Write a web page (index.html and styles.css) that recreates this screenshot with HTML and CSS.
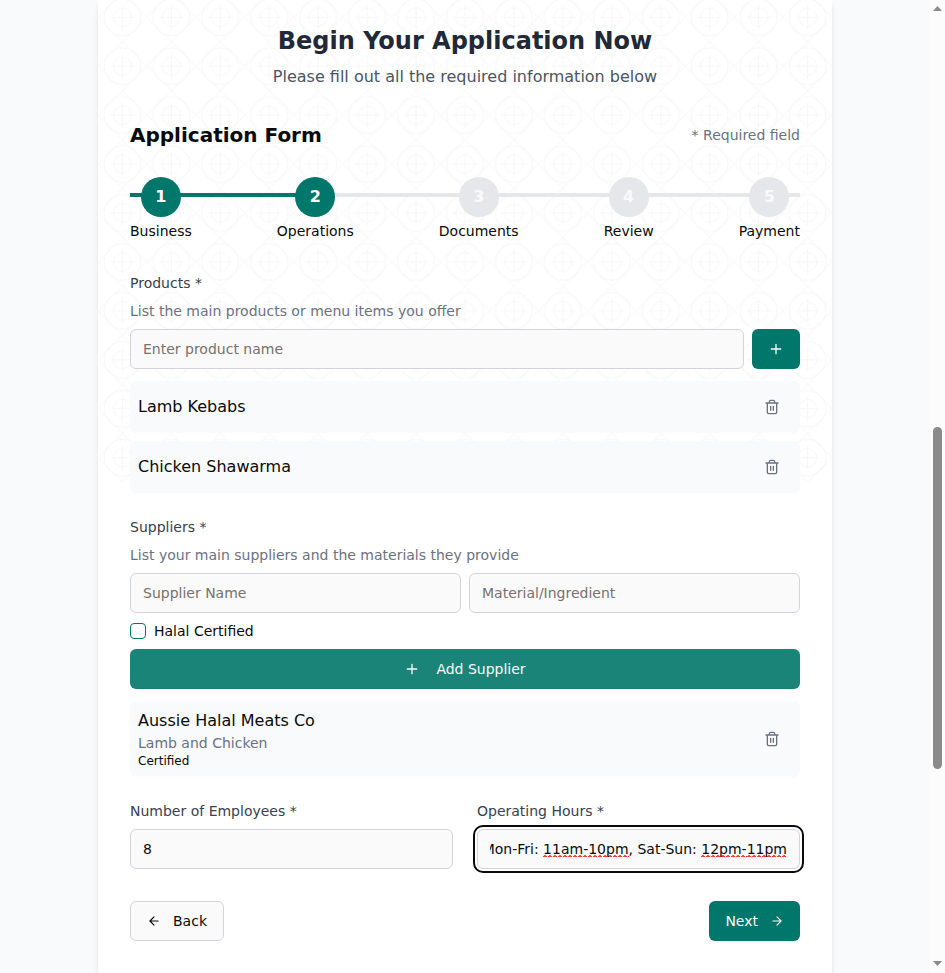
FILE: index.html
```html
<!DOCTYPE html>
<html lang="en">
<head>
<meta charset="utf-8">
<title>Begin Your Application Now</title>
<link rel="stylesheet" href="styles.css">
</head>
<body>
<svg class="defs" aria-hidden="true">
  <symbol id="trash" viewBox="0 0 24 24"><path d="M3 6h18M19 6v14c0 1-1 2-2 2H7c-1 0-2-1-2-2V6M8 6V4c0-1 1-2 2-2h4c1 0 2 1 2 2v2M10 11v6M14 11v6"/></symbol>
  <symbol id="plus" viewBox="0 0 24 24"><path d="M5 12h14M12 5v14"/></symbol>
  <symbol id="right" viewBox="0 0 24 24"><path d="M5 12h14M12 5l7 7-7 7"/></symbol>
  <symbol id="left" viewBox="0 0 24 24"><path d="M12 19l-7-7 7-7M19 12H5"/></symbol>
</svg>
<div class="window">
  <main class="page">
    <section class="card">
      <svg class="ornament" aria-hidden="true">
        <defs>
          <pattern id="tile" width="48.933" height="48.933" y="-7.2" patternUnits="userSpaceOnUse" viewBox="0 0 80 80">
            <path d="M40 0L80 40L40 80L0 40ZM40 20v40M20 40h40"/>
            <circle cx="40" cy="40" r="30"/><circle cx="40" cy="40" r="15"/>
          </pattern>
        </defs>
        <rect width="734" height="482" fill="url(#tile)" stroke="none"/>
      </svg>
      <header class="intro">
        <h1>Begin Your Application Now</h1>
        <p>Please fill out all the required information below</p>
      </header>
      <div class="form-head">
        <h2>Application Form</h2>
        <span>* Required field</span>
      </div>
      <div class="steps">
        <div class="track"><div class="progress"></div></div>
        <div class="step done"><b>1</b><span>Business</span></div>
        <div class="step done"><b>2</b><span>Operations</span></div>
        <div class="step"><b>3</b><span>Documents</span></div>
        <div class="step"><b>4</b><span>Review</span></div>
        <div class="step"><b>5</b><span>Payment</span></div>
      </div>
      <form class="form">
        <div class="group">
          <label>Products *</label>
          <p class="hint">List the main products or menu items you offer</p>
          <div class="row">
            <input class="field" placeholder="Enter product name">
            <button type="button" class="btn add"><svg class="icon"><use href="#plus"/></svg></button>
          </div>
          <div class="list">
            <div class="item"><span>Lamb Kebabs</span><svg class="icon"><use href="#trash"/></svg></div>
            <div class="item"><span>Chicken Shawarma</span><svg class="icon"><use href="#trash"/></svg></div>
          </div>
        </div>
        <div class="group">
          <label>Suppliers *</label>
          <p class="hint">List your main suppliers and the materials they provide</p>
          <div class="row">
            <input class="field" placeholder="Supplier Name">
            <input class="field" placeholder="Material/Ingredient">
          </div>
          <div class="check"><i class="box"></i><span>Halal Certified</span></div>
          <button type="button" class="btn wide"><svg class="icon"><use href="#plus"/></svg><span>Add Supplier</span></button>
          <div class="list">
            <div class="item tall">
              <div><p class="name">Aussie Halal Meats Co</p><p class="material">Lamb and Chicken</p><p class="badge">Certified</p></div>
              <svg class="icon"><use href="#trash"/></svg>
            </div>
          </div>
        </div>
        <div class="pair">
          <div><label>Number of Employees *</label><div class="field value">8</div></div>
          <div><label>Operating Hours *</label><div class="field value focused"><div class="clip"><span>Mon-Fri: <u>11am-</u><u>10pm</u>, Sat-Sun: <u>12pm-</u><u>11pm</u></span></div></div></div>
        </div>
        <div class="actions">
          <button type="button" class="btn back"><svg class="icon"><use href="#left"/></svg><span>Back</span></button>
          <button type="button" class="btn next"><span>Next</span><svg class="icon"><use href="#right"/></svg></button>
        </div>
      </form>
    </section>
  </main>
  <aside class="scrollbar">
    <svg width="9" height="5" viewBox="0 0 9 5"><path d="M0 5L4.5 0L9 5Z"/></svg>
    <div class="thumb"></div>
    <svg width="9" height="5" viewBox="0 0 9 5"><path d="M0 0L4.5 5L9 0Z"/></svg>
  </aside>
</div>
</body>
</html>
```
FILE: styles.css
```css
* { box-sizing: border-box; }
body, h1, h2, p { margin: 0; }
body { font: 14px/20px "DejaVu Sans", sans-serif; color: #0a0a0a; background: #f9fafb; }
.defs { display: none; }
.window { display: flex; height: 973px; overflow: hidden; }
.page { flex: 1; background: #f8fafc; }
.card {
  position: relative; width: 734px; height: 1040px; margin: 0 auto; padding: 25px 32px;
  background: #fff; box-shadow: 0 4px 6px -1px rgba(0,0,0,.1), 0 2px 4px -2px rgba(0,0,0,.1);
}
.ornament {
  position: absolute; top: 0; left: 0; width: 734px; height: 482px;
  fill: none; stroke: #000; opacity: .045;
}
.intro, .form-head, .steps, .form { position: relative; }
.intro { text-align: center; }
h1 { font-size: 24px; line-height: 32px; color: #1f2937; }
.intro p { margin-top: 8px; font-size: 16px; line-height: 24px; color: #4b5563; }
.form-head { display: flex; justify-content: space-between; align-items: center; margin-top: 32px; }
h2 { font-size: 20px; line-height: 28px; }
.form-head span { color: #6b7280; }

.steps { display: flex; justify-content: space-between; margin-top: 28px; }
.track { position: absolute; top: 16px; left: 0; right: 0; height: 4px; background: #e5e7eb; }
.progress { width: 25%; height: 100%; background: #00776a; }
.step { position: relative; display: flex; flex-direction: column; align-items: center; gap: 4px; }
.step b {
  width: 40px; height: 40px; border-radius: 50%; background: #e5e7eb; color: #fafafa;
  font-size: 16px; line-height: 40px; text-align: center;
}
.step.done b { background: #00776a; color: #fff; }

.form { margin-top: 32px; }
label { display: block; color: #374151; }
.hint { margin: 8px 0; color: #6b7280; }
.group { margin-bottom: 24px; }
.row { display: flex; gap: 8px; }
.field {
  flex: 1; min-width: 0; height: 40px; padding: 0 12px; border: 1px solid #d1d5db;
  border-radius: 6px; background: #fafafa; font: inherit; color: #0a0a0a;
}
.field::placeholder { color: #78716c; opacity: 1; }
.icon {
  width: 16px; height: 16px; fill: none; stroke: currentColor; stroke-width: 2;
  stroke-linecap: round; stroke-linejoin: round;
}
.btn {
  display: flex; align-items: center; justify-content: center; height: 40px; padding: 0 16px;
  border: 0; border-radius: 6px; background: #00776a; color: #fafafa; font: inherit;
}
.add { width: 48px; }
.list { display: grid; gap: 8px; margin-top: 12px; }
.item {
  display: flex; align-items: center; justify-content: space-between; height: 52px;
  padding: 0 20px 0 8px; border-radius: 6px; background: #f8fafc; font-size: 16px;
}
.item .icon { color: #6b7280; }
.tall { height: 76px; }
.name { line-height: 24px; }
.material { font-size: 14px; line-height: 20px; color: #6b7280; }
.badge { font-size: 12px; line-height: 16px; }
.check { display: flex; align-items: center; gap: 8px; height: 16px; margin: 10px 0; }
.box { width: 16px; height: 16px; border: 1px solid #00776a; border-radius: 4px; }
.wide { width: 100%; gap: 16px; background: #1a8479; }
.pair { display: grid; grid-template-columns: minmax(0, 1fr) minmax(0, 1fr); gap: 24px; }
.value.field { margin-top: 8px; line-height: 38px; }
.focused { outline: 2px solid #0a0a0a; outline-offset: 2px; box-shadow: 0 0 0 2px #fff; }
.clip { display: flex; justify-content: flex-end; overflow: hidden; white-space: nowrap; }
/* Spell-check marks: a narrow dot over a wider dash, every 5px. */
u {
  text-decoration: none;
  background:
    repeating-linear-gradient(90deg, transparent 0 1px, #ff5252 1px 3px, transparent 3px 5px) 0 calc(100% - 1px) / 100% 1px no-repeat,
    repeating-linear-gradient(90deg, #ff3b3b 0 4px, transparent 4px 5px) 0 100% / 100% 1px no-repeat;
}
.actions { display: flex; justify-content: space-between; margin-top: 32px; }
.actions .icon { width: 14px; height: 14px; }
.back { gap: 12px; border: 1px solid #d1d5db; background: #fafafa; color: #0a0a0a; }
.next { gap: 12px; }

.scrollbar {
  display: flex; flex-direction: column; justify-content: space-between; align-items: center;
  width: 15px; padding: 6px 0 7px; background: #fcfcfc; fill: #8b8b8b;
}
.thumb { width: 9px; height: 342px; margin-top: 224px; border-radius: 5px; background: #8b8b8b; }
```
